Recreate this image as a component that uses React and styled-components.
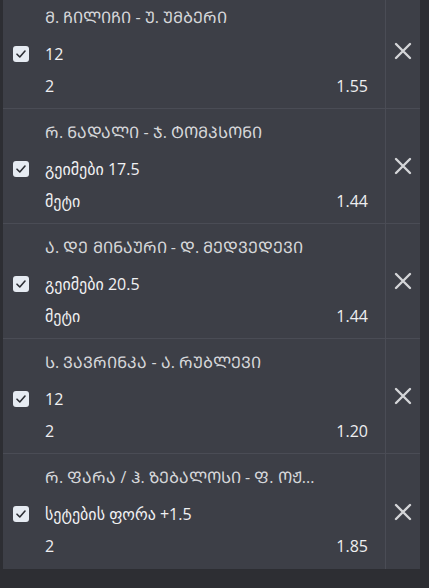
import React from 'react';
import styled, {createGlobalStyle} from "styled-components";

const GlobalStyle = createGlobalStyle`
  html, body {
    margin: 0;
    padding: 0;
    background: #2d2e33;
  }
  body {
    font-family: "Open Sans", "DejaVu Sans", sans-serif;
  }
`

const Page = styled.div`
  display: flex;
  width: 429px;
  height: 588px;
  padding-left: 3px;
  box-sizing: border-box;
  overflow: hidden;
`
const Panel = styled.div`
  width: 417px;
  height: 569px;
  background: #3d3f47;
  overflow: hidden;
`
const List = styled.div`
  display: flex;
  flex-direction: column;
  margin-top: -6px;
`
const Row = styled.div`
  display: flex;
  height: 115px;
  box-sizing: border-box;
  border-bottom: ${p => p.$last ? "none" : "1px solid #4a4c55"};
`
const Body = styled.div`
  flex: 1;
  display: flex;
  flex-direction: column;
  padding: 11px 17px 0 10px;
`
const Title = styled.div`
  padding-left: 32px;
  line-height: 24px;
  font-size: 16px;
  color: #d6d7da;
  white-space: nowrap;
  overflow: hidden;
`
const Line = styled.div`
  display: flex;
  align-items: center;
  gap: 16px;
  margin-top: 13px;
  height: 24px;
`
const Check = styled.span`
  width: 16px;
  height: 16px;
  border-radius: 3px;
  background: #e6ebf2;
  display: flex;
  align-items: center;
  justify-content: center;
`
const Selection = styled.span`
  font-size: 16px;
  color: #f1f1f3;
`
const Bottom = styled.div`
  display: flex;
  justify-content: space-between;
  align-items: center;
  height: 24px;
  margin-top: 8px;
  padding-left: 32px;
  font-size: 16px;
  color: #eeeef0;
`
const Odds = styled.span`
  font-weight: 500;
`
const Remove = styled.div`
  width: 33px;
  border-left: 1px solid #4a4c55;
  display: flex;
  align-items: center;
  justify-content: center;
  padding-right: 1px;
`

const toCaps = s => Array.from(s).map(ch => {
    const cp = ch.codePointAt(0);
    if (cp >= 0x10D0 && cp <= 0x10FA) return String.fromCodePoint(cp - 0x10D0 + 0x1C90);
    return ch;
}).join("");

const bets = [
    {title: "მ. ჩილიჩი - უ. უმბერი", pick: "12", market: "2", odds: "1.55"},
    {title: "რ. ნადალი - ჯ. ტომპსონი", pick: "გეიმები 17.5", market: "მეტი", odds: "1.44"},
    {title: "ა. დე მინაური - დ. მედვედევი", pick: "გეიმები 20.5", market: "მეტი", odds: "1.44"},
    {title: "ს. ვავრინკა - ა. რუბლევი", pick: "12", market: "2", odds: "1.20"},
    {title: "რ. ფარა / ჰ. ზებალოსი - ფ. ოჟ...", pick: "სეტების ფორა +1.5", market: "2", odds: "1.85"},
];

const App = () => (
    <Page>
        <GlobalStyle/>
        <Panel>
            <List>
                {bets.map((b, i) => (
                    <Row key={i} $last={i === bets.length - 1}>
                        <Body>
                            <Title>{toCaps(b.title)}</Title>
                            <Line>
                                <Check>
                                    <svg width="12" height="12" viewBox="0 0 12 12">
                                        <path d="M2 6.2 L4.8 9 L10 3" fill="none" stroke="#2b2d33" strokeWidth="1.6"
                                              strokeLinecap="round" strokeLinejoin="round"/>
                                    </svg>
                                </Check>
                                <Selection>{b.pick}</Selection>
                            </Line>
                            <Bottom>
                                <span>{b.market}</span>
                                <Odds>{b.odds}</Odds>
                            </Bottom>
                        </Body>
                        <Remove>
                            <svg width="18" height="18" viewBox="0 0 18 18">
                                <path d="M2 2 L16 16 M16 2 L2 16" stroke="#d4d5d8" strokeWidth="2.4"
                                      strokeLinecap="round"/>
                            </svg>
                        </Remove>
                    </Row>
                ))}
            </List>
        </Panel>
    </Page>
);

export default App;
